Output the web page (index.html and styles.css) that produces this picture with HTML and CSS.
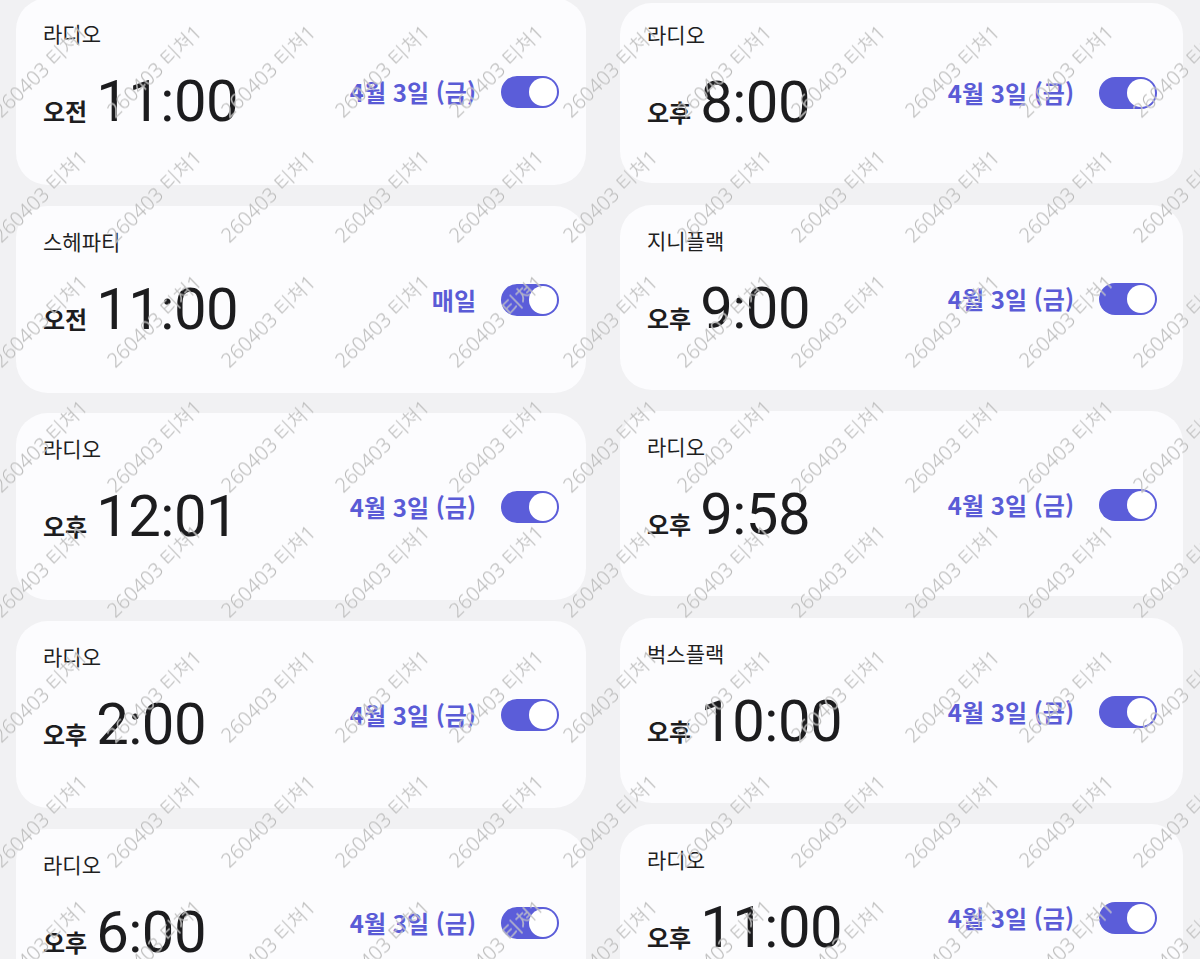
FILE: index.html
```html
<!DOCTYPE html>
<html lang="ko">
<head>
<meta charset="utf-8">
<title>알람</title>
<link rel="stylesheet" href="styles.css">
</head>
<body>
<div class="page">
  <div class="columns">
    <section class="col col-left">
      <article class="card">
        <div class="label">라디오</div>
        <div class="row">
          <div class="time"><span class="ampm">오전</span><span class="clock">11:00</span></div>
          <div class="when"><span class="date">4월 3일 (금)</span><span class="toggle"></span></div>
        </div>
      </article>
      <article class="card">
        <div class="label">스헤파티</div>
        <div class="row">
          <div class="time"><span class="ampm">오전</span><span class="clock">11:00</span></div>
          <div class="when"><span class="date">매일</span><span class="toggle"></span></div>
        </div>
      </article>
      <article class="card">
        <div class="label">라디오</div>
        <div class="row">
          <div class="time"><span class="ampm">오후</span><span class="clock">12:01</span></div>
          <div class="when"><span class="date">4월 3일 (금)</span><span class="toggle"></span></div>
        </div>
      </article>
      <article class="card">
        <div class="label">라디오</div>
        <div class="row">
          <div class="time"><span class="ampm">오후</span><span class="clock">2:00</span></div>
          <div class="when"><span class="date">4월 3일 (금)</span><span class="toggle"></span></div>
        </div>
      </article>
      <article class="card">
        <div class="label">라디오</div>
        <div class="row">
          <div class="time"><span class="ampm">오후</span><span class="clock">6:00</span></div>
          <div class="when"><span class="date">4월 3일 (금)</span><span class="toggle"></span></div>
        </div>
      </article>
    </section>
    <section class="col col-right">
      <article class="card cut">
        <div class="label">라디오</div>
        <div class="row">
          <div class="time"><span class="ampm">오후</span><span class="clock">8:00</span></div>
          <div class="when"><span class="date">4월 3일 (금)</span><span class="toggle"></span></div>
        </div>
      </article>
      <article class="card">
        <div class="label">지니플랙</div>
        <div class="row">
          <div class="time"><span class="ampm">오후</span><span class="clock">9:00</span></div>
          <div class="when"><span class="date">4월 3일 (금)</span><span class="toggle"></span></div>
        </div>
      </article>
      <article class="card">
        <div class="label">라디오</div>
        <div class="row">
          <div class="time"><span class="ampm">오후</span><span class="clock">9:58</span></div>
          <div class="when"><span class="date">4월 3일 (금)</span><span class="toggle"></span></div>
        </div>
      </article>
      <article class="card">
        <div class="label">벅스플랙</div>
        <div class="row">
          <div class="time"><span class="ampm">오후</span><span class="clock">10:00</span></div>
          <div class="when"><span class="date">4월 3일 (금)</span><span class="toggle"></span></div>
        </div>
      </article>
      <article class="card">
        <div class="label">라디오</div>
        <div class="row">
          <div class="time"><span class="ampm">오후</span><span class="clock">11:00</span></div>
          <div class="when"><span class="date">4월 3일 (금)</span><span class="toggle"></span></div>
        </div>
      </article>
    </section>
  </div>
  <svg class="watermark" width="1200" height="959" aria-hidden="true">
    <defs>
      <pattern id="wm" x="-17" y="8.5" width="114" height="125" patternUnits="userSpaceOnUse">
        <text class="wm-text" x="57" y="62.5" transform="rotate(-44 57 62.5)" text-anchor="middle" dominant-baseline="central">260403 티쳐1</text>
      </pattern>
    </defs>
    <rect width="1200" height="959" fill="url(#wm)"/>
  </svg>
</div>
</body>
</html>
```

FILE: styles.css
```css
* {
  box-sizing: border-box;
  margin: 0;
  padding: 0;
}

html,
body {
  background: #f1f1f3;
}

body {
  margin: 0;
  font-family: "Noto Sans CJK KR", "Noto Sans", sans-serif;
  color: #1d1d1f;
}

.page {
  position: relative;
  width: 1200px;
  height: 959px;
  overflow: hidden;
}

.columns {
  display: flex;
  gap: 34px;
  padding-left: 16px;
}

.col {
  display: flex;
  flex-direction: column;
}

.col-left {
  width: 570px;
  margin-top: -2px;
  gap: 20.7px;
}

.col-right {
  width: 563px;
  padding-top: 3px;
  gap: 21.5px;
}

.card {
  flex: none;
  height: 187px;
  padding: 23px 27px 0 27px;
  background: #fcfcfe;
  border-radius: 32px;
}

.col-right .card {
  height: 185px;
  padding-right: 26px;
}

.col-right .card.cut {
  height: 180px;
  padding-top: 19px;
}

.label {
  font-size: 21px;
  line-height: 25px;
  color: #1f1f1f;
}

.row {
  display: flex;
  justify-content: space-between;
  align-items: flex-start;
  margin-top: 26px;
}

.time {
  display: flex;
  align-items: baseline;
}

.ampm {
  font-size: 24px;
  font-weight: 700;
  line-height: 1;
  color: #1d1d1f;
}

.clock {
  font-family: Roboto, "Noto Sans", sans-serif;
  font-size: 58px;
  font-weight: 400;
  line-height: 58px;
  letter-spacing: -0.5px;
  margin-left: 9px;
  color: #1c1c1e;
}

.when {
  display: flex;
  align-items: center;
  gap: 25px;
  height: 32px;
  margin-top: 4px;
}

.date {
  font-size: 24px;
  font-weight: 700;
  line-height: 1;
  color: #5a5bd6;
}

.toggle {
  position: relative;
  width: 58px;
  height: 32px;
  border-radius: 16px;
  background: #5b5dd9;
}

.toggle::after {
  content: "";
  position: absolute;
  top: 2px;
  right: 2px;
  width: 28px;
  height: 28px;
  border-radius: 50%;
  background: #ffffff;
}

.watermark {
  position: absolute;
  top: 0;
  left: 0;
  width: 1200px;
  height: 959px;
  pointer-events: none;
}

.wm-text {
  font-family: "Noto Sans", "Noto Sans CJK KR", sans-serif;
  font-size: 20px;
  font-weight: 300;
  fill: #b8b8b8;
  stroke: #ffffff;
  stroke-width: 0.6px;
  stroke-opacity: 0.5;
  paint-order: stroke;
}
```
